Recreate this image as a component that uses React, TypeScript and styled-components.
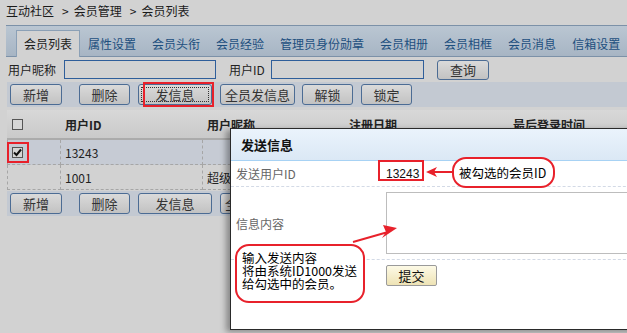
import styled, { createGlobalStyle } from 'styled-components';

const GlobalStyle = createGlobalStyle`
  html, body {
    margin: 0;
    padding: 0;
  }
  body {
    background: #d2d2d2;
    font-family: "Noto Sans CJK SC", "Noto Sans", sans-serif;
    font-size: 12px;
    color: #222;
  }
`;

const tabs = ['会员列表', '属性设置', '会员头衔', '会员经验', '管理员身份勋章', '会员相册', '会员相框', '会员消息', '信箱设置'];

const actions = [
  { label: '新增', w: 52, gap: 17 },
  { label: '删除', w: 51, gap: 8 },
  { label: '发信息', w: 74, gap: 8, focusable: true },
  { label: '全员发信息', w: 75, gap: 7 },
  { label: '解锁', w: 51, gap: 8 },
  { label: '锁定', w: 51, gap: 0 },
];

const members = [
  { id: '13243', nick: '', checked: true },
  { id: '1001', nick: '超级管理员', checked: false },
];

const Checkbox = ({ checked }: { checked?: boolean }) => (
  <StyleIn.Check>
    {checked && (
      <svg width="9" height="9" viewBox="0 0 9 9">
        <path d="M1 4.5 L3.5 7 L8 1.5" stroke="#111" strokeWidth="2" fill="none" />
      </svg>
    )}
  </StyleIn.Check>
);

const ActionBar = ({ focus }: { focus?: boolean }) => (
  <StyleIn.ButtonBand>
    {actions.map((a) => (
      <StyleIn.Button key={a.label} $w={a.w} $gap={a.gap} $focused={focus && a.focusable}>
        {a.label}
      </StyleIn.Button>
    ))}
  </StyleIn.ButtonBand>
);

const App = () => {
  return (
    <>
      <GlobalStyle />
      <StyleIn.Page>
        <StyleIn.Crumbs>
          互动社区<span className="sep">&gt;</span>会员管理<span className="sep">&gt;</span>会员列表
        </StyleIn.Crumbs>

        <StyleIn.TabBar>
          {tabs.map((t, i) => (
            <StyleIn.Tab key={t} $active={i === 0}>{t}</StyleIn.Tab>
          ))}
        </StyleIn.TabBar>

        <StyleIn.SearchRow>
          <StyleIn.Label $w={56}>用户昵称</StyleIn.Label>
          <StyleIn.Input $w={150} />
          <StyleIn.Label $w={42} $ml={13}>用户ID</StyleIn.Label>
          <StyleIn.Input $w={151} />
          <StyleIn.Button $w={52} $ml={13} $h={20}>查询</StyleIn.Button>
        </StyleIn.SearchRow>

        <ActionBar focus />

        <StyleIn.Grid>
          <StyleIn.HeadCell><Checkbox /></StyleIn.HeadCell>
          <StyleIn.HeadCell>用户ID</StyleIn.HeadCell>
          <StyleIn.HeadCell>用户昵称</StyleIn.HeadCell>
          <StyleIn.HeadCell>注册日期</StyleIn.HeadCell>
          <StyleIn.HeadCell>最后登录时间</StyleIn.HeadCell>
          {members.map((m) => (
            <StyleIn.Row key={m.id} $selected={m.checked}>
              <StyleIn.Cell>{m.checked && <Checkbox checked />}</StyleIn.Cell>
              <StyleIn.Cell>{m.id}</StyleIn.Cell>
              <StyleIn.Cell>{m.nick}</StyleIn.Cell>
              <StyleIn.Cell />
              <StyleIn.Cell />
            </StyleIn.Row>
          ))}
        </StyleIn.Grid>

        <StyleIn.BottomBand>
          <ActionBar />
        </StyleIn.BottomBand>

        <StyleIn.Dialog>
          <StyleIn.DialogTitle>发送信息</StyleIn.DialogTitle>
          <StyleIn.FormRow $h={25}>
            <StyleIn.FormLabel>发送用户ID</StyleIn.FormLabel>
            <StyleIn.FormValue $digits>13243</StyleIn.FormValue>
          </StyleIn.FormRow>
          <StyleIn.FormRow $h={72}>
            <StyleIn.FormLabel>信息内容</StyleIn.FormLabel>
            <StyleIn.FormValue $top>
              <StyleIn.TextArea />
            </StyleIn.FormValue>
          </StyleIn.FormRow>
          <StyleIn.FormRow $h={40} $plain>
            <span />
            <StyleIn.FormValue $top>
              <StyleIn.Submit>提交</StyleIn.Submit>
            </StyleIn.FormValue>
          </StyleIn.FormRow>
        </StyleIn.Dialog>

        {/* annotations */}
        <StyleIn.RedBox style={{ left: 143, top: 82, width: 71, height: 25 }} />
        <StyleIn.RedBox style={{ left: 7, top: 142, width: 22, height: 21 }} />
        <StyleIn.RedBox style={{ left: 378, top: 160, width: 46, height: 21 }} />

        <StyleIn.Callout style={{ left: 452, top: 157, width: 103, height: 31 }}>
          被勾选的会员ID
        </StyleIn.Callout>
        <StyleIn.Callout $multi style={{ left: 235, top: 244, width: 130, height: 59 }}>
          输入发送内容<br />将由系统ID1000发送<br />给勾选中的会员。
        </StyleIn.Callout>

        <StyleIn.Arrow width="28" height="14" viewBox="0 0 28 14" style={{ left: 425, top: 165 }}>
          <line x1="9" y1="7" x2="27" y2="7" stroke="#e8212b" strokeWidth="2" />
          <path d="M1 7 L12 2 L9 7 L12 12 Z" fill="#e8212b" />
        </StyleIn.Arrow>
        <StyleIn.Arrow width="48" height="20" viewBox="0 0 48 20" style={{ left: 352, top: 224 }}>
          <line x1="1" y1="18" x2="36" y2="8" stroke="#e8212b" strokeWidth="2" />
          <path d="M45 4 L31 1 L34 8 L30 14 Z" fill="#e8212b" />
        </StyleIn.Arrow>
      </StyleIn.Page>
    </>
  );
};

const StyleIn = {
  Page: styled.div`
    position: relative;
    width: 627px;
    height: 333px;
    overflow: hidden;
    padding-left: 6px;
    box-sizing: border-box;
  `,
  Crumbs: styled.div`
    height: 25px;
    line-height: 21px;
    font-size: 12px;
    color: #1a1a1a;

    .sep {
      margin: 0 5px 0 8px;
    }
  `,
  TabBar: styled.div`
    display: flex;
    align-items: flex-end;
    height: 30px;
    padding-left: 10px;
    border-top: 1px solid #7c91a8;
    border-bottom: 1px solid #7c91a8;
    background: linear-gradient(#bac6d2, #a7b5c4);
  `,
  Tab: styled.div<{ $active?: boolean }>`
    height: 26px;
    line-height: 26px;
    padding: 0 7px 0 7px;
    font-size: 12px;
    color: ${(p) => (p.$active ? '#1a1a1a' : '#1d4f7e')};
    background: ${(p) => (p.$active ? '#d2d2d2' : 'transparent')};
    border: 1px solid ${(p) => (p.$active ? '#8ba0b6' : 'transparent')};
    border-bottom: none;
    margin-bottom: -1px;
    white-space: nowrap;
  `,
  SearchRow: styled.div`
    display: flex;
    align-items: center;
    height: 25px;
    padding-left: 2px;
  `,
  Label: styled.span<{ $w: number; $ml?: number }>`
    width: ${(p) => p.$w}px;
    margin-left: ${(p) => p.$ml || 0}px;
    font-size: 12px;
    white-space: nowrap;
  `,
  Input: styled.div<{ $w: number }>`
    width: ${(p) => p.$w}px;
    height: 17px;
    border: 1px solid #2f5e9a;
    background: #d2d2d2;
  `,
  ButtonBand: styled.div`
    display: flex;
    align-items: center;
    height: 25px;
    margin-left: 1px;
    padding-left: 3px;
    background: #c3c9d2;
  `,
  Button: styled.button<{ $w: number; $gap?: number; $ml?: number; $h?: number; $focused?: boolean }>`
    width: ${(p) => p.$w}px;
    height: ${(p) => p.$h || 21}px;
    margin-left: ${(p) => p.$ml || 0}px;
    margin-right: ${(p) => p.$gap || 0}px;
    padding: 0;
    border: 1px solid #4c6c94;
    border-radius: 3px;
    background: linear-gradient(#dadada, #c2c2c2);
    font-family: inherit;
    font-size: 13px;
    color: #333;
    line-height: 1;
    outline: ${(p) => (p.$focused ? '1px dotted #333' : 'none')};
    outline-offset: -4px;
  `,
  Grid: styled.div`
    display: grid;
    grid-template-columns: 54px 142px 142px 164px 1fr;
    margin: 3px 0 0 1px;
  `,
  HeadCell: styled.div`
    display: flex;
    align-items: center;
    height: 28px;
    padding-left: 4px;
    font-weight: bold;
    font-size: 12px;
    background: linear-gradient(#d8d8d8, #cacaca);
    border-bottom: 2px solid #ababab;

    &:first-child {
      padding-left: 5px;
    }
  `,
  Row: styled.div<{ $selected?: boolean }>`
    display: contents;

    > div {
      background: ${(p) => (p.$selected ? '#c6cbd4' : 'transparent')};
    }
  `,
  Cell: styled.div`
    display: flex;
    align-items: center;
    height: 24px;
    padding-left: 4px;
    border-right: 1px dashed #a6a6a6;
    border-bottom: 1px dashed #a6a6a6;
    font-size: 12px;
    overflow: hidden;
    white-space: nowrap;

    &:first-child {
      border-left: 1px dashed #a6a6a6;
      padding-left: 4px;
    }
  `,
  Check: styled.span`
    display: inline-flex;
    align-items: center;
    justify-content: center;
    width: 11px;
    height: 11px;
    border: 1px solid #555;
    background: #d6d6d6;
    box-sizing: border-box;
  `,
  BottomBand: styled.div`
    margin-top: 1px;
  `,
  Dialog: styled.div`
    position: absolute;
    left: 230px;
    top: 128px;
    width: 420px;
    height: 200px;
    background: #fff;
    border: 1px solid #2a2a2a;
    box-shadow: -4px 2px 6px rgba(0, 0, 0, 0.35);
  `,
  DialogTitle: styled.div`
    height: 31px;
    line-height: 31px;
    padding-left: 10px;
    font-weight: bold;
    font-size: 13px;
    color: #111;
    background: linear-gradient(#eaf3fc, #dbe8f5);
    border-bottom: 1px solid #a7d2f4;
  `,
  FormRow: styled.div<{ $h: number; $plain?: boolean }>`
    display: grid;
    grid-template-columns: 155px 1fr;
    height: ${(p) => p.$h}px;
    border-bottom: ${(p) => (p.$plain ? 'none' : '1px dashed #d3dae6')};
  `,
  FormLabel: styled.div`
    display: flex;
    align-items: center;
    padding-left: 5px;
    font-size: 12px;
    color: #666;
  `,
  FormValue: styled.div<{ $top?: boolean; $digits?: boolean }>`
    display: flex;
    align-items: ${(p) => (p.$top ? 'flex-start' : 'center')};
    padding-top: ${(p) => (p.$top ? 5 : 0)}px;
    font-family: ${(p) => (p.$digits ? '"Liberation Sans", sans-serif' : 'inherit')};
    font-size: 12px;
    color: #111;
  `,
  TextArea: styled.div`
    width: 300px;
    height: 60px;
    border: 1px solid #bdbdbd;
  `,
  Submit: styled.button`
    width: 51px;
    height: 21px;
    padding: 0;
    border: 1px solid #9a9a9a;
    border-radius: 2px;
    background: linear-gradient(#fdfae6, #eee3b5);
    font-family: inherit;
    font-size: 13px;
    color: #111;
  `,
  RedBox: styled.div`
    position: absolute;
    border: 2px solid #e8212b;
    box-sizing: border-box;
    pointer-events: none;
  `,
  Callout: styled.div<{ $multi?: boolean }>`
    position: absolute;
    box-sizing: border-box;
    border: 2px solid #e8212b;
    border-radius: 14px;
    background: #fff;
    font-size: 12.5px;
    line-height: ${(p) => (p.$multi ? '13px' : '27px')};
    padding: ${(p) => (p.$multi ? '5px 0 0 5px' : '0 0 0 5px')};
    color: #000;
    white-space: nowrap;
  `,
  Arrow: styled.svg`
    position: absolute;
    overflow: visible;
  `,
};

export default App;
